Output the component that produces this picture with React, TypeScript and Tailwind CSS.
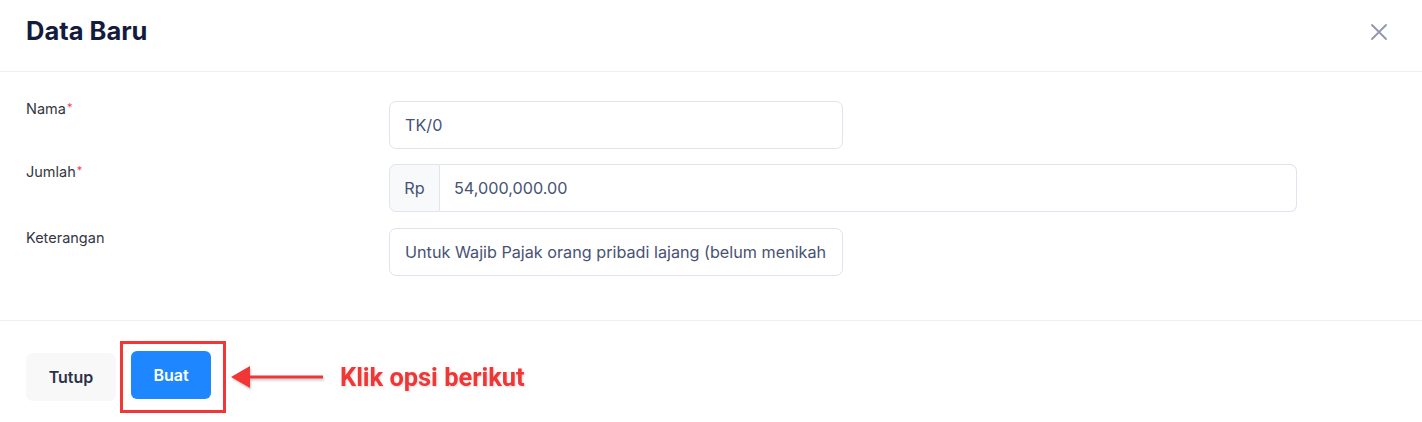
import React from 'react';

const Req: React.FC = () => <sup className="text-[#f43f5e] text-[11px] relative -top-[3px] ml-[1px]">*</sup>;

const App: React.FC = () => {
  return (
    <div className="w-[1422px] h-[422px] bg-white font-['Inter',sans-serif] overflow-hidden">
      <header className="h-[72px] flex items-center justify-between pl-[26px] pr-[34px] border-b border-[#eeeff2]">
        <h1 className="text-[25.5px] font-bold text-[#141c3d] -mt-[8px]">Data Baru</h1>
        <button className="text-[#8f97b0] -mt-[8px]" aria-label="close">
          <svg width="18" height="18" viewBox="0 0 18 18" fill="none" stroke="currentColor" strokeWidth="1.8" strokeLinecap="round">
            <path d="M2 2L16 16M16 2L2 16" />
          </svg>
        </button>
      </header>

      <div className="h-[248px] pl-[26px] pt-[29px] flex flex-col">
        <div className="flex">
          <label className="w-[363px] text-[14.5px] text-[#343741] leading-[20px] -mt-[2px]">
            Nama<Req />
          </label>
          <div className="w-[454px] h-[48px] border border-[#e1e3ee] rounded-[7px] flex items-center px-[15px] text-[16.2px] text-[#475274]">
            TK/0
          </div>
        </div>
        <div className="flex mt-[15px]">
          <label className="w-[363px] text-[14.5px] text-[#343741] leading-[20px] -mt-[2px]">
            Jumlah<Req />
          </label>
          <div className="flex w-[908px] h-[48px]">
            <div className="w-[51px] border border-[#e1e3ee] bg-[#f8f9fb] rounded-l-[7px] flex items-center justify-center text-[16.2px] text-[#475274]">
              Rp
            </div>
            <div className="flex-1 border border-l-0 border-[#e1e3ee] rounded-r-[7px] flex items-center px-[14px] text-[16.2px] text-[#475274]">
              54,000,000.00
            </div>
          </div>
        </div>
        <div className="flex mt-[16px]">
          <label className="w-[363px] text-[14.5px] text-[#343741] leading-[20px]">Keterangan</label>
          <div className="w-[454px] h-[48px] border border-[#e1e3ee] rounded-[7px] flex items-center px-[15px] text-[16.2px] text-[#475274] overflow-hidden whitespace-nowrap">
            Untuk Wajib Pajak orang pribadi lajang (belum menikah
          </div>
        </div>
      </div>

      <footer className="border-t border-[#eeeff2] pl-[26px] pt-[20px] flex items-center">
        <button className="w-[90px] h-[48px] rounded-[7px] bg-[#f8f8f9] text-[16px] font-semibold text-[#2b3248]">Tutup</button>
        <div className="ml-[4px] w-[106px] h-[72px] border-[3px] border-[#f23535] flex items-start pl-[8px] pt-[7px]">
          <button className="w-[80px] h-[48px] rounded-[6px] bg-[#1e87ff] text-[16px] font-semibold text-white">Buat</button>
        </div>
        <svg width="100" height="30" viewBox="0 0 100 30" className="ml-[3px] drop-shadow-[1px_2px_1px_rgba(0,0,0,0.2)]">
          <path d="M2 15L21 4V13.5H94V16.5H21V26Z" fill="#f23535" />
        </svg>
        <span className="ml-[11px] text-[25.4px] font-bold text-[#f23535] font-['Roboto',sans-serif] drop-shadow-[1px_1px_1px_rgba(0,0,0,0.15)]">Klik opsi berikut</span>
      </footer>
    </div>
  );
};

export default App;
